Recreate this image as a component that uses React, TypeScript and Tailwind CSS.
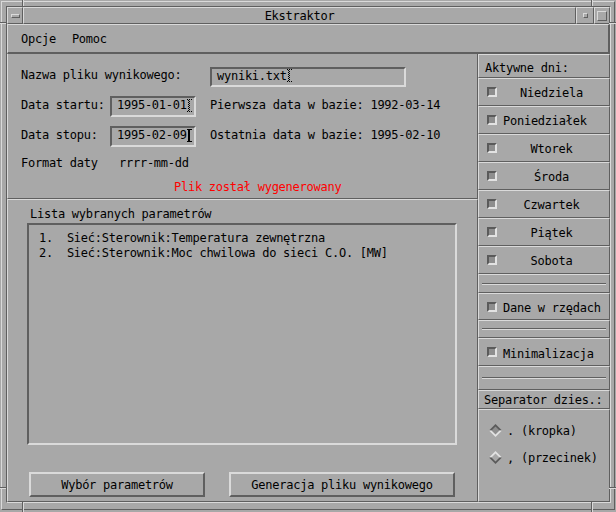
import React from "react";

const raised = "border border-t-[#dadada] border-l-[#dadada] border-r-[#5f5f5f] border-b-[#5f5f5f]";
const sunken2 = "border-2 border-t-[#5f5f5f] border-l-[#5f5f5f] border-r-[#dadada] border-b-[#dadada]";
const raised2 = "border-2 border-t-[#dadada] border-l-[#dadada] border-r-[#5f5f5f] border-b-[#5f5f5f]";

function Caret({ solid }: { solid?: boolean }) {
  if (solid) {
    return (
      <svg width="5" height="13" viewBox="0 0 5 13" className="shrink-0">
        <rect x="0" y="0" width="5" height="1" fill="#000" />
        <rect x="1" y="0" width="2" height="13" fill="#000" />
        <rect x="0" y="12" width="5" height="1" fill="#000" />
      </svg>
    );
  }
  const px: React.ReactNode[] = [];
  for (let y = 0; y < 13; y++) {
    for (let x = 0; x < 5; x++) {
      const onShape = y === 0 || y === 12 ? true : x === 1 || x === 2;
      if (onShape && (x + y) % 2 === 0) px.push(<rect key={`${x}-${y}`} x={x} y={y} width="1" height="1" fill="#000" />);
    }
  }
  return (
    <svg width="5" height="13" viewBox="0 0 5 13" className="shrink-0">
      {px}
    </svg>
  );
}

function Field({ value, w, h, solid }: { value: string; w: string; h: string; solid?: boolean }) {
  return (
    <div className={`${sunken2} ${w} ${h} flex items-center pl-[5px] pb-[3px] bg-[#a8a8a8]`}>
      <span className="whitespace-pre">{value}</span>
      <Caret solid={solid} />
    </div>
  );
}

function Check() {
  return <div className="w-[10px] h-[10px] shrink-0 border-2 border-t-[#5a5a5a] border-l-[#5a5a5a] border-r-[#e2e2e2] border-b-[#e2e2e2] bg-[#8e8e8e]" />;
}

function DayRow({ label, left }: { label: string; left?: boolean }) {
  return (
    <div className={`${raised} h-[28px] flex items-center pl-[8px]`}>
      <Check />
      <div className={`w-[97px] ml-[6px] pt-[2px] flex ${left ? "justify-start" : "justify-center"} whitespace-pre`}>{label}</div>
    </div>
  );
}

function SepRow({ h }: { h: string }) {
  return (
    <div className={`${raised} ${h} flex flex-col justify-center px-[3px]`}>
      <div className="h-[1px] bg-[#5f5f5f]" />
      <div className="h-[1px] bg-[#dadada]" />
    </div>
  );
}

function Radio({ selected, label }: { selected?: boolean; label: string }) {
  const top = selected ? "#5a5a5a" : "#e2e2e2";
  const bot = selected ? "#e2e2e2" : "#5a5a5a";
  return (
    <div className="h-[27px] flex items-center pl-[10px]">
      <svg width="13" height="13" viewBox="0 0 13 13" className="shrink-0">
        <polygon points="0,6.5 6.5,0 13,6.5" fill={top} />
        <polygon points="0,6.5 6.5,13 13,6.5" fill={bot} />
        <polygon points="2.5,6.5 6.5,2.5 10.5,6.5 6.5,10.5" fill={selected ? "#8e8e8e" : "#a8a8a8"} />
      </svg>
      <span className="ml-[5px] whitespace-pre">{label}</span>
    </div>
  );
}

export default function App() {
  return (
    <div
      className="relative w-[616px] h-[512px] bg-[#a8a8a8] text-black text-[12px] tracking-[-0.25px] leading-none overflow-hidden"
      style={{ fontFamily: "'DejaVu Sans Mono', 'Liberation Mono', monospace" }}
    >
      {/* resize corner ticks */}
      <div className="absolute left-[22px] top-0 w-[1px] h-[6px] bg-[#5f5f5f]" />
      <div className="absolute left-[23px] top-0 w-[1px] h-[6px] bg-[#dadada]" />
      <div className="absolute left-[591px] top-0 w-[1px] h-[6px] bg-[#5f5f5f]" />
      <div className="absolute left-[592px] top-0 w-[1px] h-[6px] bg-[#dadada]" />
      <div className="absolute left-0 top-[22px] w-[6px] h-[1px] bg-[#5f5f5f]" />
      <div className="absolute left-0 top-[23px] w-[6px] h-[1px] bg-[#dadada]" />
      <div className="absolute left-[609px] top-[22px] w-[7px] h-[1px] bg-[#5f5f5f]" />
      <div className="absolute left-[609px] top-[23px] w-[7px] h-[1px] bg-[#dadada]" />
      <div className="absolute left-0 top-[487px] w-[6px] h-[1px] bg-[#5f5f5f]" />
      <div className="absolute left-0 top-[488px] w-[6px] h-[1px] bg-[#dadada]" />
      <div className="absolute left-[609px] top-[487px] w-[7px] h-[1px] bg-[#5f5f5f]" />
      <div className="absolute left-[609px] top-[488px] w-[7px] h-[1px] bg-[#dadada]" />
      <div className="absolute left-[22px] top-[502px] w-[1px] h-[10px] bg-[#5f5f5f]" />
      <div className="absolute left-[23px] top-[502px] w-[1px] h-[10px] bg-[#dadada]" />
      <div className="absolute left-[591px] top-[502px] w-[1px] h-[10px] bg-[#5f5f5f]" />
      <div className="absolute left-[592px] top-[502px] w-[1px] h-[10px] bg-[#dadada]" />

      <div className={`ml-[1px] mt-[1px] w-[614px] h-[509px] ${raised} pt-[4px] pl-[4px] pr-[3px] pb-[6px]`}>
        <div className="h-full w-full border border-t-[#5f5f5f] border-l-[#5f5f5f] border-r-[#dadada] border-b-[#dadada] flex flex-col">
          {/* title bar */}
          <div className="h-[17px] flex shrink-0">
            <div className={`${raised} w-[16px] flex items-center justify-center`}>
              <div className={`${raised} w-[9px] h-[4px]`} />
            </div>
            <div className={`${raised} flex-1 flex items-center justify-center pt-[1px]`}>Ekstraktor</div>
            <div className={`${raised} w-[18px] flex items-center justify-center`}>
              <div className={`${raised} w-[5px] h-[5px]`} />
            </div>
            <div className={`${raised} w-[16px] flex items-center justify-center`}>
              <div className={`${raised} w-[10px] h-[10px]`} />
            </div>
          </div>
          {/* menu bar */}
          <div className="h-[30px] shrink-0 flex items-center pl-[13px] pt-[1px] border border-t-[#dadada] border-l-[#dadada] border-r-2 border-b-2 border-r-[#5f5f5f] border-b-[#5f5f5f]">
            <span>Opcje</span>
            <span className="ml-[16px]">Pomoc</span>
          </div>
          {/* main */}
          <div className="flex flex-1 min-h-0">
            {/* left */}
            <div className="w-[471px] flex flex-col">
              <div className="h-[145px] shrink-0 border-l border-r border-b border-l-[#dadada] border-r-[#5f5f5f] border-b-[#5f5f5f] flex flex-col">
                <div className="mt-[13px] h-[20px] flex items-center pl-[13px]">
                  <div className="w-[189px] pb-[5px]">Nazwa pliku wynikowego:</div>
                  <Field value="wyniki.txt" w="w-[196px]" h="h-[20px]" />
                </div>
                <div className="mt-[9px] h-[21px] flex items-center pl-[13px]">
                  <div className="w-[89px] pb-[4px]">Data startu:</div>
                  <Field value="1995-01-01" w="w-[86px]" h="h-[21px]" />
                  <div className="ml-[14px] pb-[4px] whitespace-pre">Pierwsza data w bazie: 1992-03-14</div>
                </div>
                <div className="mt-[9px] h-[21px] flex items-center pl-[13px]">
                  <div className="w-[89px] pb-[4px]">Data stopu:</div>
                  <Field value="1995-02-09" w="w-[86px]" h="h-[21px]" solid />
                  <div className="ml-[14px] pb-[4px] whitespace-pre">Ostatnia data w bazie: 1995-02-10</div>
                </div>
                <div className="mt-[5px] h-[20px] flex items-center pl-[13px] pt-[1px]">
                  <div className="w-[98px]">Format daty</div>
                  <div>rrrr-mm-dd</div>
                </div>
                <div className="mt-[5px] h-[18px] flex items-center pl-[166px] pt-[2px] text-[#ff0000]">Plik został wygenerowany</div>
              </div>
              <div className="flex-1 border border-t-[#dadada] border-l-[#dadada] border-r-[#5f5f5f] border-b-[#5f5f5f] flex flex-col">
                <div className="h-[23px] flex items-center pl-[22px] pt-[4px]">Lista wybranych parametrów</div>
                <div className={`${sunken2} ml-[19px] w-[430px] h-[222px] pt-[5px] pl-[10px]`}>
                  <div className="h-[15px] flex items-center whitespace-pre">1.  Sieć:Sterownik:Temperatura zewnętrzna</div>
                  <div className="h-[15px] flex items-center whitespace-pre">2.  Sieć:Sterownik:Moc chwilowa do sieci C.O. [MW]</div>
                </div>
                <div className="mt-[27px] flex pl-[21px]">
                  <div className={`${raised2} w-[176px] h-[25px] flex items-center justify-center pt-[1px]`}>Wybór parametrów</div>
                  <div className={`${raised2} ml-[24px] w-[226px] h-[25px] flex items-center justify-center pt-[1px]`}>Generacja pliku wynikowego</div>
                </div>
              </div>
            </div>
            {/* right */}
            <div className="flex-1 flex flex-col">
              <div className={`${raised} h-[24px] flex items-center pl-[6px] pt-[3px]`}>Aktywne dni:</div>
              <DayRow label="Niedziela" />
              <DayRow label="Poniedziałek" left />
              <DayRow label="Wtorek" />
              <DayRow label="Środa" />
              <DayRow label="Czwartek" />
              <DayRow label="Piątek" />
              <DayRow label="Sobota" />
              <SepRow h="h-[19px]" />
              <div className={`${raised} h-[27px] flex items-center pl-[8px]`}>
                <Check />
                <span className="ml-[6px] pt-[2px] whitespace-pre">Dane w rzędach</span>
              </div>
              <SepRow h="h-[18px]" />
              <div className={`${raised} h-[28px] flex items-center pl-[8px]`}>
                <Check />
                <span className="ml-[6px] pt-[3px] whitespace-pre">Minimalizacja</span>
              </div>
              <SepRow h="h-[24px]" />
              <div className={`${raised} h-[19px] flex items-center pl-[5px] pt-[1px]`}>Separator dzies.:</div>
              <div className={`${raised} flex-1 pt-[7px]`}>
                <Radio selected label=". (kropka)" />
                <Radio label=", (przecinek)" />
              </div>
            </div>
          </div>
        </div>
      </div>
    </div>
  );
}
